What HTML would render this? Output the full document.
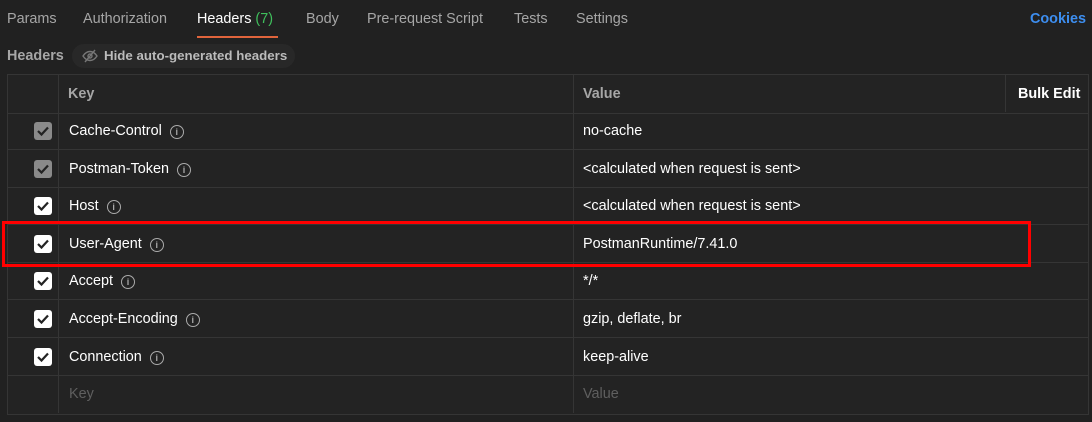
<!DOCTYPE html><html><head><style>
body{margin:0;width:1092px;height:422px;background:#212121;font-family:"Liberation Sans",sans-serif;font-size:14.4px;color:#fff;position:relative;overflow:hidden}
.a{position:absolute}
.tab{position:absolute;top:11px;color:#a6a6a6;font-size:14.4px}
.row{position:absolute;left:7px;width:1081px;border-bottom:1px solid #353535}
.cb{position:absolute;left:27px;width:18px;height:18px;border-radius:3px;background:#fff}
.cb.g{background:#8a8a8a}
.cb svg{position:absolute;left:2px;top:3px}
.k{position:absolute;left:62px}
.v{position:absolute;left:576px}
.i{display:inline-block;width:12px;height:12px;border:1px solid #aaa;border-radius:50%;font-size:9px;line-height:12px;text-align:center;color:#aaa;margin-left:8px;vertical-align:0px;font-weight:bold}
</style></head><body>
<div class="tab" style="left:7px">Params</div>
<div class="tab" style="left:83px">Authorization</div>
<div class="tab" style="left:197px;color:#fff">Headers <span style="color:#3fbf5c">(7)</span></div>
<div class="a" style="left:197px;top:36px;width:81px;height:2px;background:#e0643c"></div>
<div class="tab" style="left:306px">Body</div>
<div class="tab" style="left:367px">Pre-request Script</div>
<div class="tab" style="left:514px">Tests</div>
<div class="tab" style="left:576px">Settings</div>
<div class="tab" style="left:1030px;color:#3d8ef0;font-weight:bold">Cookies</div>
<div class="a" style="left:7px;top:48px;color:#a6a6a6;font-weight:bold">Headers</div>
<div class="a" style="left:72px;top:44px;width:223px;height:24px;border-radius:12px;background:#282828"></div>
<svg class="a" style="left:82px;top:49px" width="16" height="14" viewBox="0 0 16 14"><path d="M1 7c2-3 4.5-4.5 7-4.5S13 4 15 7c-2 3-4.5 4.5-7 4.5S3 10 1 7z" fill="none" stroke="#777" stroke-width="1.4"/><circle cx="8" cy="7" r="2" fill="none" stroke="#777" stroke-width="1.4"/><path d="M3 13L13 1" stroke="#777" stroke-width="1.4"/></svg>
<div class="a" style="left:104px;top:48px;color:#bbb;font-weight:bold;font-size:13.3px">Hide auto-generated headers</div>
<div class="a" style="left:7px;top:74px;width:1080px;height:339px;border:1px solid #353535;background:#232323"></div>
<div class="row" style="top:74px;height:38px;border-top:1px solid #353535"></div>
<div class="a" style="left:58px;top:75px;width:1px;height:338px;background:#353535"></div>
<div class="a" style="left:573px;top:75px;width:1px;height:338px;background:#353535"></div>
<div class="a" style="left:1005px;top:75px;width:1px;height:37px;background:#353535"></div>
<div class="a" style="left:68px;top:86px;color:#a6a6a6;font-weight:bold">Key</div>
<div class="a" style="left:583px;top:86px;color:#a6a6a6;font-weight:bold">Value</div>
<div class="a" style="left:1018px;top:86px;font-weight:bold">Bulk Edit</div>

<div class="row" style="top:112px;height:37px"><div class="cb g" style="top:10px"><svg width="14" height="12"><path d="M2 6l3.5 3.5L12 2.5" stroke="#232323" stroke-width="2.2" fill="none"/></svg></div><div class="k" style="top:11px">Cache-Control<span class="i">i</span></div><div class="v" style="top:11px">no-cache</div></div>
<div class="row" style="top:150px;height:37px"><div class="cb g" style="top:10px"><svg width="14" height="12"><path d="M2 6l3.5 3.5L12 2.5" stroke="#232323" stroke-width="2.2" fill="none"/></svg></div><div class="k" style="top:11px">Postman-Token<span class="i">i</span></div><div class="v" style="top:11px">&lt;calculated when request is sent&gt;</div></div>
<div class="row" style="top:187px;height:37px"><div class="cb" style="top:10px"><svg width="14" height="12"><path d="M2 6l3.5 3.5L12 2.5" stroke="#232323" stroke-width="2.2" fill="none"/></svg></div><div class="k" style="top:11px">Host<span class="i">i</span></div><div class="v" style="top:11px">&lt;calculated when request is sent&gt;</div></div>
<div class="row" style="top:225px;height:37px"><div class="cb" style="top:10px"><svg width="14" height="12"><path d="M2 6l3.5 3.5L12 2.5" stroke="#232323" stroke-width="2.2" fill="none"/></svg></div><div class="k" style="top:11px">User-Agent<span class="i">i</span></div><div class="v" style="top:11px">PostmanRuntime/7.41.0</div></div>
<div class="row" style="top:262px;height:37px"><div class="cb" style="top:10px"><svg width="14" height="12"><path d="M2 6l3.5 3.5L12 2.5" stroke="#232323" stroke-width="2.2" fill="none"/></svg></div><div class="k" style="top:11px">Accept<span class="i">i</span></div><div class="v" style="top:11px">*/*</div></div>
<div class="row" style="top:300px;height:37px"><div class="cb" style="top:10px"><svg width="14" height="12"><path d="M2 6l3.5 3.5L12 2.5" stroke="#232323" stroke-width="2.2" fill="none"/></svg></div><div class="k" style="top:11px">Accept-Encoding<span class="i">i</span></div><div class="v" style="top:11px">gzip, deflate, br</div></div>
<div class="row" style="top:338px;height:37px"><div class="cb" style="top:10px"><svg width="14" height="12"><path d="M2 6l3.5 3.5L12 2.5" stroke="#232323" stroke-width="2.2" fill="none"/></svg></div><div class="k" style="top:11px">Connection<span class="i">i</span></div><div class="v" style="top:11px">keep-alive</div></div>
<div class="a" style="left:69px;top:386px;color:#5f5f5f">Key</div>
<div class="a" style="left:583px;top:386px;color:#5f5f5f">Value</div>
<div class="a" style="left:2px;top:221px;width:1023px;height:40px;border:3px solid #f00"></div>
</body></html>
